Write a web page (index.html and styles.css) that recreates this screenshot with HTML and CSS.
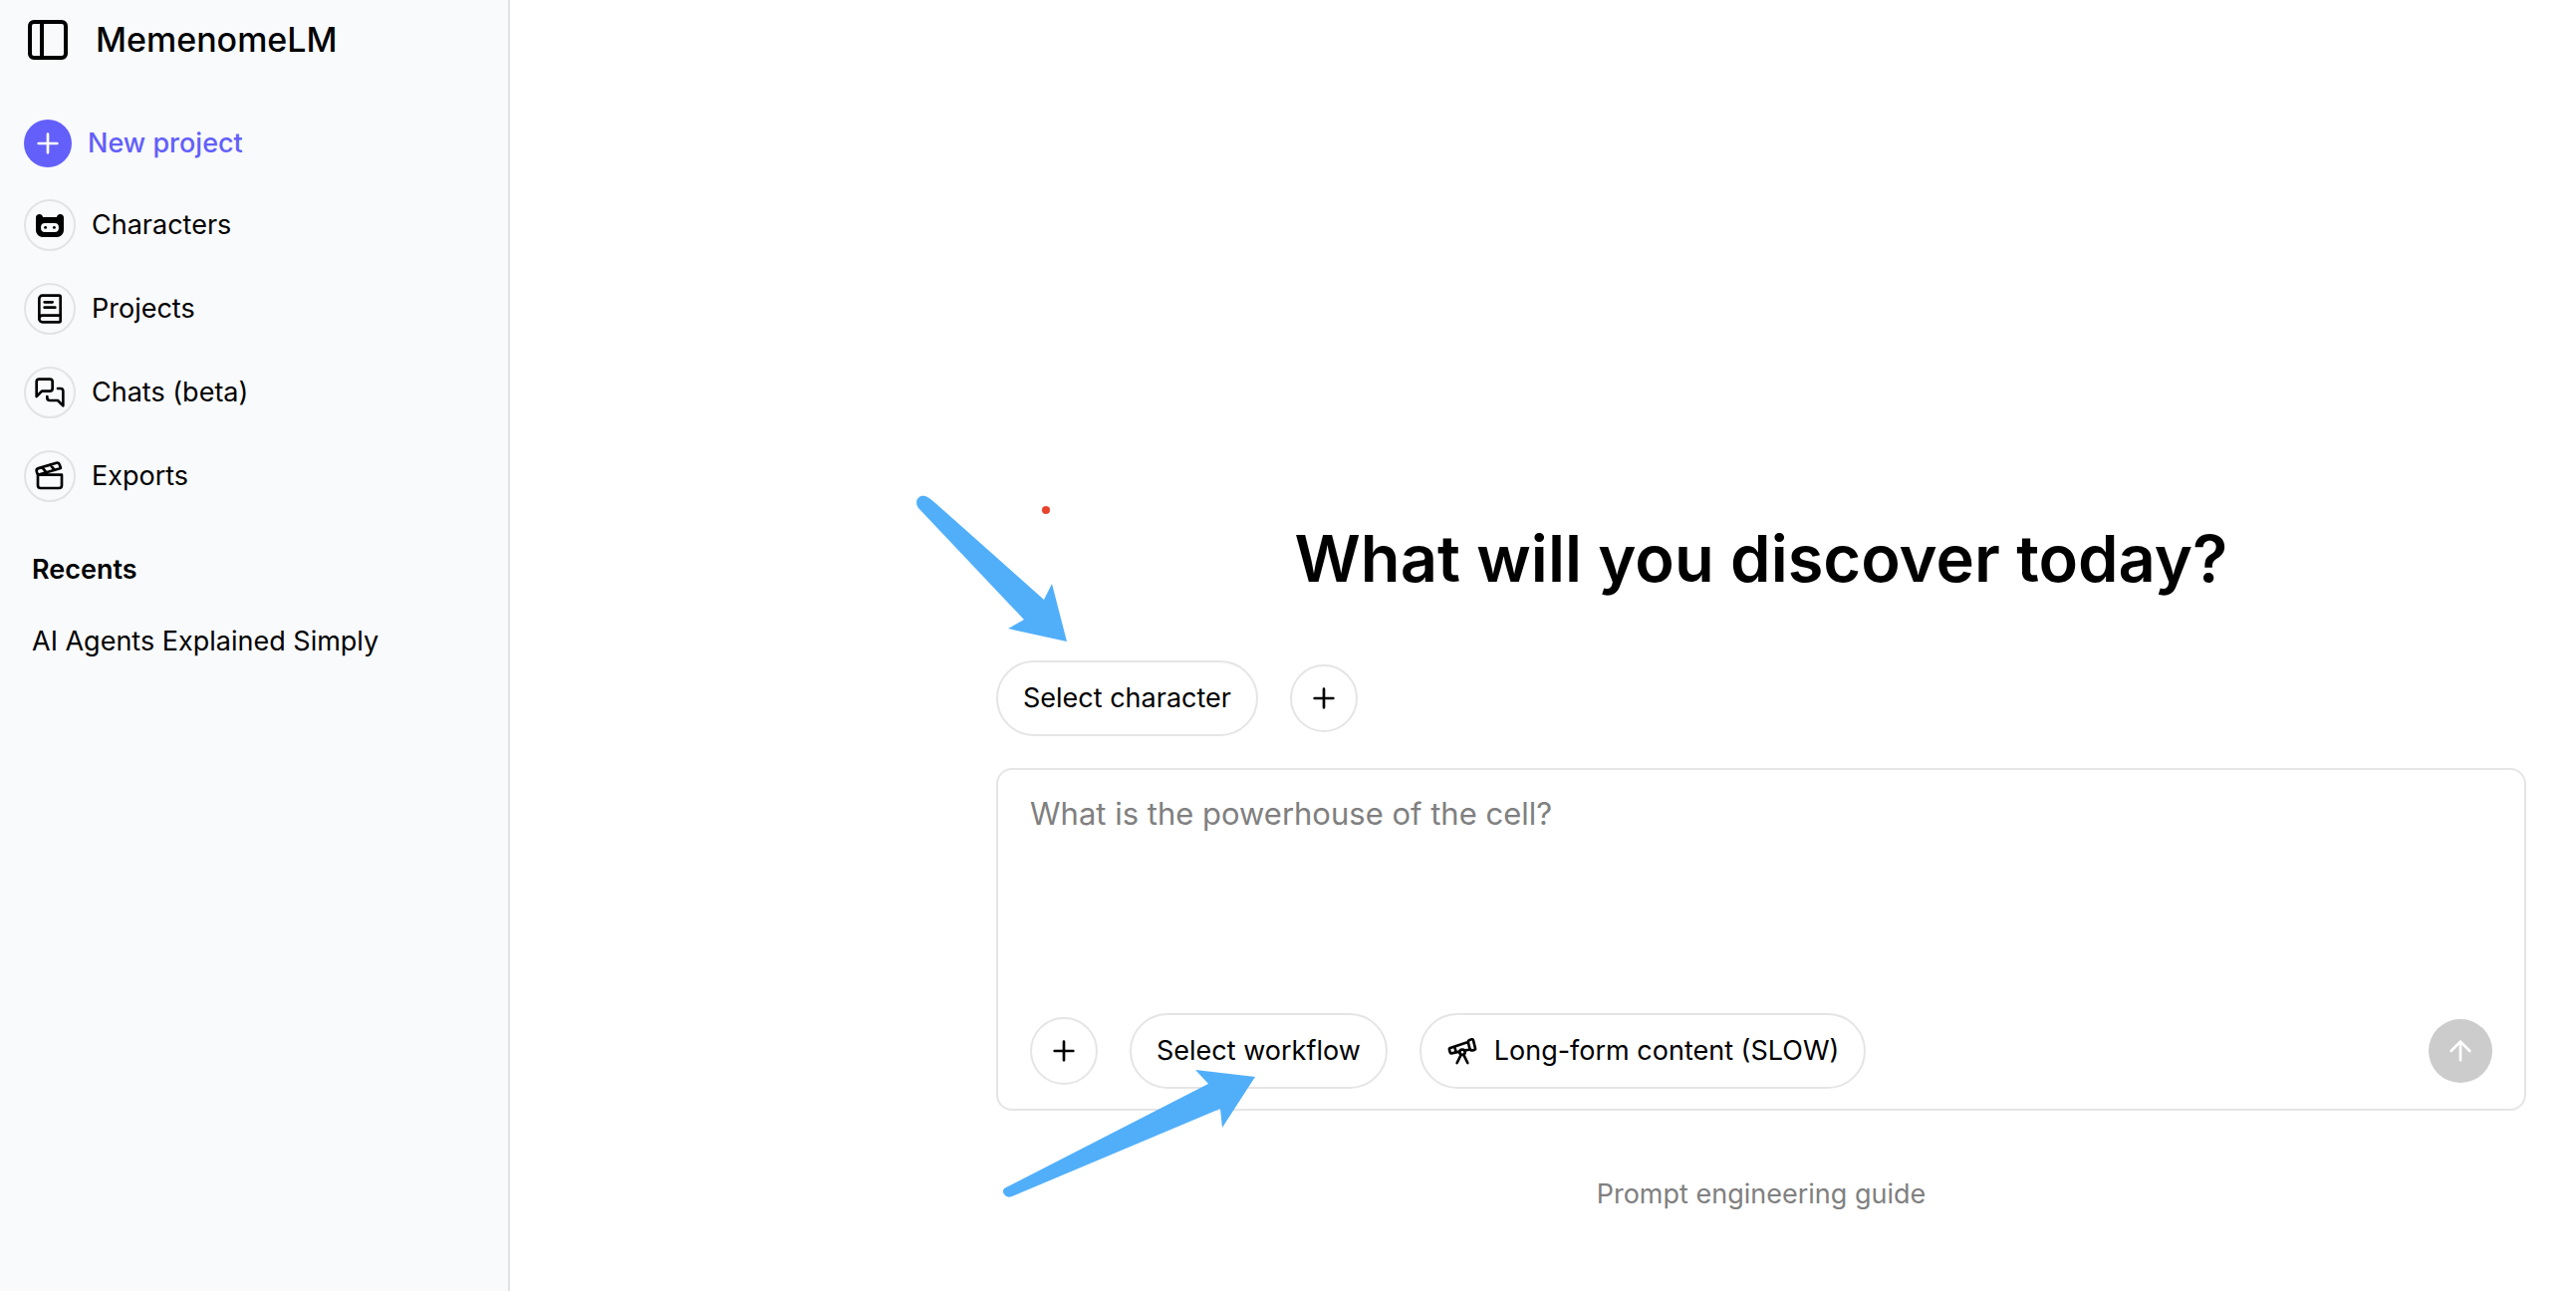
FILE: index.html
```html
<!DOCTYPE html>
<html lang="en">
<head>
<meta charset="utf-8">
<title>MemenomeLM</title>
<meta name="viewport" content="width=device-width, initial-scale=1">
<link rel="stylesheet" href="styles.css">
</head>
<body>
<div class="app">
  <aside class="sidebar">
    <header class="brand">
      <button class="toggle" type="button" aria-label="Toggle sidebar">
        <svg width="40" height="40" viewBox="0 0 40 40" fill="none" stroke="currentColor" stroke-width="4"><rect x="2" y="2" width="36" height="36" rx="4"/><path d="M14 2v36"/></svg>
      </button>
      <span class="brand-name">MemenomeLM</span>
    </header>
    <nav class="nav">
      <a class="nav-item nav-new" href="#new"><span class="disc disc-accent"><svg class="icon" viewBox="0 0 24 24"><path d="M5 12h14M12 5v14"/></svg></span>New project</a>
      <a class="nav-item" href="#characters"><span class="disc"><svg class="icon" viewBox="0 0 24 24"><path fill="currentColor" stroke="none" fill-rule="evenodd" d="M1.500 6.200C1.500 4.700 2.800 3.700 4.300 3.800C5.600 3.900 6.300 4.700 6.900 6H17.100C17.700 4.700 18.400 3.900 19.700 3.800C21.200 3.700 22.500 4.700 22.500 6.200V15.500C22.500 18.800 20 21 16.800 21H7.200C4 21 1.500 18.800 1.500 15.500ZM8.300 10.500A3 3 0 0 0 5.300 13.500V14.300A3 3 0 0 0 8.300 17.300H15.700A3 3 0 0 0 18.700 14.300V13.500A3 3 0 0 0 15.700 10.500Z"/><circle cx="8.700" cy="13.800" r="1.100" fill="currentColor" stroke="none"/><circle cx="15.300" cy="13.800" r="1.100" fill="currentColor" stroke="none"/></svg></span>Characters</a>
      <a class="nav-item" href="#projects"><span class="disc"><svg class="icon" viewBox="0 0 24 24"><path d="M4 19.500v-15A2.500 2.500 0 0 1 6.500 2H19a1 1 0 0 1 1 1v18a1 1 0 0 1-1 1H6.500a1 1 0 0 1 0-5H20M8 11h8M8 7h6"/></svg></span>Projects</a>
      <a class="nav-item" href="#chats"><span class="disc"><svg class="icon" viewBox="0 0 24 24"><path d="M14 9a2 2 0 0 1-2 2H6l-4 4V4a2 2 0 0 1 2-2h8a2 2 0 0 1 2 2zM18 9h2a2 2 0 0 1 2 2v11l-4-4h-6a2 2 0 0 1-2-2v-1"/></svg></span>Chats (beta)</a>
      <a class="nav-item" href="#exports"><span class="disc"><svg class="icon" viewBox="0 0 24 24"><path d="M20.200 6 3 11l-.9-2.400c-.3-1.100.3-2.200 1.300-2.500l13.500-4c1.100-.3 2.200.3 2.500 1.300ZM6.200 5.300l3.100 3.900M12.400 3.400l3.100 4M3 11h18v8a2 2 0 0 1-2 2H5a2 2 0 0 1-2-2Z"/></svg></span>Exports</a>
    </nav>
    <section class="recents">
      <h2 class="recents-title">Recents</h2>
      <a class="recent" href="#recent">AI Agents Explained Simply</a>
    </section>
  </aside>

  <main class="main">
    <div class="panel">
      <h1 class="headline">What will you discover today?</h1>
      <div class="characters">
        <button class="pill" type="button">Select character</button>
        <button class="round" type="button" aria-label="Add character"><svg class="icon" viewBox="0 0 24 24"><path d="M5 12h14M12 5v14"/></svg></button>
      </div>
      <form class="composer">
        <textarea class="prompt" aria-label="Prompt" placeholder="What is the powerhouse of the cell?"></textarea>
        <div class="actions">
          <button class="round" type="button" aria-label="Add attachment"><svg class="icon" viewBox="0 0 24 24"><path d="M5 12h14M12 5v14"/></svg></button>
          <button class="pill" type="button">Select workflow</button>
          <button class="pill" type="button"><svg class="icon" viewBox="0 0 24 24"><path d="m10.065 12.493-6.180 1.318a.934.934 0 0 1-1.108-.702l-.537-2.150a1.070 1.070 0 0 1 .691-1.265l13.504-4.440M13.560 11.747l4.332-.924M16 21l-3.105-6.210M16.485 5.940a2 2 0 0 1 1.455-2.425l1.090-.272a1 1 0 0 1 1.212.727l1.515 6.060a1 1 0 0 1-.727 1.213l-1.090.272a2 2 0 0 1-2.425-1.455zM6.158 8.633l1.114 4.456M8 21l3.105-6.210"/><circle cx="12" cy="13" r="2"/></svg>Long-form content (SLOW)</button>
          <button class="send" type="submit" aria-label="Send"><svg class="icon" viewBox="0 0 24 24"><path d="m5 12 7-7 7 7M12 19V5"/></svg></button>
        </div>
      </form>
      <a class="guide" href="#guide">Prompt engineering guide</a>
      <svg class="mark mark-character" width="160" height="150" viewBox="0 0 160 150" aria-hidden="true"><path fill="#51affa" d="M29 5 138 102 146 86 161 144 102 131 118 122 12 10C8 4 11-1 15-2C19-3 22-1 29 5Z"/></svg>
      <svg class="mark mark-workflow" width="254" height="128" viewBox="0 0 254 128" aria-hidden="true"><path fill="#51affa" d="M4 118 207 14 194 0 254 7 221 58 219 39 10 127Q5 129 2 125Q-1 120 4 118Z"/></svg>
      <span class="dot"></span>
    </div>
  </main>
</div>
</body>
</html>
```
FILE: styles.css
```css
* { box-sizing: border-box; }

body {
  margin: 0;
  background: #fff;
  color: #000;
  font: 400 27px/40px Inter, "Liberation Sans", sans-serif;
}

a { color: inherit; text-decoration: none; }

button {
  padding: 0;
  border: 0;
  background: none;
  color: inherit;
  font: inherit;
  cursor: pointer;
}

.app { display: flex; min-height: 100vh; }

.icon {
  flex: none;
  width: 32px;
  height: 32px;
  fill: none;
  stroke: currentColor;
  stroke-width: 2;
  stroke-linecap: round;
  stroke-linejoin: round;
}

/* Sidebar */
.sidebar {
  flex: none;
  width: 512px;
  padding: 16px 24px;
  border-right: 2px solid #e0e2e5;
  background: #f9fafc;
}

.brand { display: flex; align-items: center; gap: 28px; height: 48px; padding-left: 4px; }
.toggle, .toggle svg { display: block; }
.brand-name { font-size: 34px; font-weight: 500; }

.nav { display: flex; flex-direction: column; gap: 32px; margin-top: 56px; }
.nav-item { display: flex; align-items: center; gap: 16px; }
.nav-new { color: #635ffa; font-weight: 500; }

.disc {
  display: grid;
  place-items: center;
  flex: none;
  width: 52px;
  height: 52px;
  border: 2px solid #e2e3e5;
  border-radius: 50%;
}
.disc-accent { width: 48px; height: 48px; border: 0; background: #635ffa; color: #fff; }

.recents { margin-top: 48px; padding-left: 8px; }
.recents-title { margin: 0 0 32px; font-size: 27px; font-weight: 600; }
.recent { display: block; }

/* Main area */
.main {
  display: flex;
  flex: 1;
  flex-direction: column;
  align-items: flex-end;
  justify-content: flex-end;
  padding: 32px 50px 77px;
}

.panel { position: relative; width: 100%; max-width: 1536px; }
.headline { margin: 0 0 64px; font-size: 65px; font-weight: 600; line-height: 76px; text-align: center; }

.characters, .actions { display: flex; align-items: center; gap: 32px; }

.pill {
  display: flex;
  align-items: center;
  gap: 16px;
  height: 76px;
  padding: 0 25px;
  border: 2px solid #e5e5e5;
  border-radius: 38px;
}

.round, .send { display: grid; place-items: center; border-radius: 50%; }
.round { width: 68px; height: 68px; border: 2px solid #e5e5e5; }
.send { width: 64px; height: 64px; margin-left: auto; background: #ccc; color: #fff; }

.composer {
  margin-top: 32px;
  padding: 20px 32px;
  border: 2px solid #e5e5e5;
  border-radius: 16px;
}

.prompt {
  display: block;
  width: 100%;
  height: 192px;
  margin-bottom: 32px;
  padding: 0;
  border: 0;
  outline: 0;
  resize: none;
  background: none;
  color: inherit;
  font: 400 31px/48px Inter, "Liberation Sans", sans-serif;
}
.prompt::placeholder { color: #808080; opacity: 1; }

.guide { display: block; width: fit-content; margin: 64px auto 0; color: #808080; }

/* Annotations drawn over the panel */
.mark { position: absolute; overflow: visible; pointer-events: none; }
.mark-character { left: -90px; bottom: 569px; }
.mark-workflow { left: 6px; bottom: 17px; }
.dot {
  position: absolute;
  left: 46px;
  bottom: 703px;
  width: 8px;
  height: 8px;
  border-radius: 50%;
  background: #e8442b;
}
```
